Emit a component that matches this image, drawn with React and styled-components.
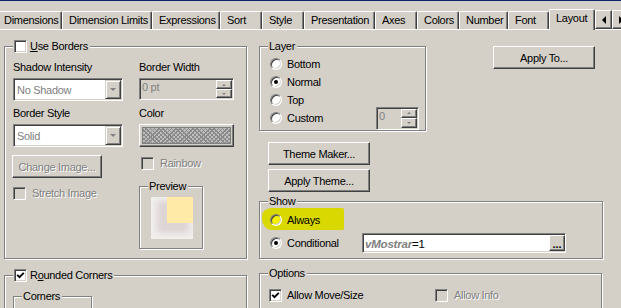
import React from "react";
import styled, { createGlobalStyle } from "styled-components";

const GlobalStyle = createGlobalStyle`
  html, body {
    margin: 0;
    padding: 0;
    background: #d4d0c8;
  }
  body {
    font-family: "Liberation Sans", Arial, sans-serif;
    font-size: 11px;
    letter-spacing: -0.3px;
    color: #000;
  }
  * {
    box-sizing: border-box;
  }
`;

const Window = styled.div`
  width: 621px;
  height: 308px;
  overflow: hidden;
  background: #d4d0c8;
  border-top: 1px solid #0a246a;
`;

/* ---------- tabs ---------- */

const TabRow = styled.div`
  display: flex;
  align-items: flex-start;
  height: 21px;
  margin: 8px 0 0 -3px;
`;

const Tab = styled.div`
  flex: none;
  width: ${(p) => p.$w}px;
  height: ${(p) => (p.$active ? 21 : 18)}px;
  margin-top: ${(p) => (p.$active ? 0 : 2)}px;
  padding: 2px 0 0 6px;
  line-height: 13px;
  white-space: nowrap;
  background: #d4d0c8;
  border-top: 1px solid #fff;
  border-left: 1px solid #fff;
  border-right: 1px solid #404040;
  border-radius: 2px 2px 0 0;
  box-shadow: inset -1px 0 #808080;
  position: relative;
  z-index: ${(p) => (p.$active ? 1 : 0)};
`;

const ScrollBtn = styled.div`
  flex: none;
  width: 17px;
  height: 19px;
  margin-top: 1px;
  display: flex;
  align-items: center;
  justify-content: center;
  background: #d4d0c8;
  border: 1px solid;
  border-color: #fff #404040 #404040 #fff;
  box-shadow: inset -1px -1px #808080;
`;

const Arrow = styled.span`
  width: 0;
  height: 0;
  border-style: solid;
  border-color: transparent;
  ${(p) => {
    const s = p.$size || 4;
    const c = p.$color || "#000";
    if (p.$dir === "left") return `border-width: ${s}px ${s}px ${s}px 0; border-right-color: ${c};`;
    if (p.$dir === "right") return `border-width: ${s}px 0 ${s}px ${s}px; border-left-color: ${c};`;
    if (p.$dir === "up") return `border-width: 0 ${s}px ${s}px; border-bottom-color: ${c};`;
    return `border-width: ${s}px ${s}px 0; border-top-color: ${c};`;
  }}
`;

/* ---------- panel ---------- */

const Panel = styled.div`
  margin-top: -1px;
  border-top: 1px solid #fff;
  display: grid;
  grid-template-columns: 243px 345px;
  column-gap: 12px;
  align-items: start;
  padding: 16px 0 0 4px;
`;

const Column = styled.div`
  display: flex;
  flex-direction: column;
  align-items: flex-start;
`;

const Group = styled.div`
  position: relative;
  flex: none;
  width: ${(p) => p.$w}px;
  height: ${(p) => p.$h}px;
  margin-top: ${(p) => p.$mt || 0}px;
  padding: ${(p) => p.$pad || "0"};
  border: 1px solid #808080;
  box-shadow: inset 1px 1px #fff, 1px 1px #fff;
`;

const Legend = styled.div`
  position: absolute;
  top: -7px;
  left: 8px;
  height: 13px;
  padding: 0 2px 0 1px;
  display: flex;
  align-items: center;
  gap: 3px;
  line-height: 13px;
  white-space: nowrap;
  background: #d4d0c8;
`;

const Label = styled.div`
  height: 13px;
  line-height: 13px;
  white-space: nowrap;
  margin-top: ${(p) => p.$mt || 0}px;
  color: ${(p) => (p.$disabled ? "#808080" : "#000")};
  text-shadow: ${(p) => (p.$disabled ? "1px 1px 0 #fff" : "none")};
`;

const Row = styled.div`
  position: relative;
  display: flex;
  align-items: center;
  gap: ${(p) => p.$gap ?? 5}px;
  height: ${(p) => p.$h || 18}px;
  margin-top: ${(p) => p.$mt || 0}px;
  margin-left: ${(p) => p.$ml || 0}px;
`;

const Sunken = styled.div`
  border: 1px solid;
  border-color: #808080 #fff #fff #808080;
  box-shadow: inset 1px 1px #404040, inset -1px -1px #d4d0c8;
`;

const CheckBox = styled(Sunken)`
  flex: none;
  width: 13px;
  height: 13px;
  display: flex;
  align-items: center;
  justify-content: center;
  background: ${(p) => (p.$disabled ? "#d4d0c8" : "#fff")};
`;

const RadioDot = styled.div`
  position: relative;
  flex: none;
  width: 12px;
  height: 12px;
  border-radius: 50%;
  display: flex;
  align-items: center;
  justify-content: center;
  background: ${(p) => (p.$marked ? "#f4f000" : "#fff")};
  border: 1px solid;
  border-color: #808080 #fff #fff #808080;
  box-shadow: inset 1px 1px #404040, inset -1px -1px #d4d0c8;

  &::after {
    content: "";
    width: 4px;
    height: 4px;
    border-radius: 50%;
    background: ${(p) => (p.$on ? "#000" : "transparent")};
  }
`;

const Button = styled.button`
  flex: none;
  width: ${(p) => p.$w}px;
  height: 23px;
  margin: ${(p) => p.$m || 0};
  padding: 0;
  display: flex;
  align-items: center;
  justify-content: center;
  font: inherit;
  letter-spacing: inherit;
  background: #d4d0c8;
  border: 1px solid;
  border-color: #fff #404040 #404040 #fff;
  box-shadow: inset -1px -1px #808080;
  color: ${(p) => (p.$disabled ? "#808080" : "#000")};
  text-shadow: ${(p) => (p.$disabled ? "1px 1px 0 #fff" : "none")};
`;

const Combo = styled(Sunken)`
  width: ${(p) => p.$w}px;
  height: 23px;
  display: flex;
  align-items: center;
  padding: 0 0 0 3px;
  background: #fff;
  color: #808080;
`;

const DropBtn = styled.div`
  margin-left: auto;
  width: 16px;
  height: 19px;
  margin-right: 1px;
  display: flex;
  align-items: center;
  justify-content: center;
  background: #d4d0c8;
  border: 1px solid;
  border-color: #d4d0c8 #404040 #404040 #d4d0c8;
  box-shadow: inset 1px 1px #fff, inset -1px -1px #808080;
`;

const Spin = styled(Sunken)`
  width: ${(p) => p.$w}px;
  height: ${(p) => p.$h}px;
  display: flex;
  padding: 1px 1px 1px 2px;
  background: #d4d0c8;
  color: #808080;
`;

const SpinText = styled.span`
  flex: 1;
  line-height: 13px;
  padding-top: 1px;
`;

const SpinBtns = styled.div`
  width: 16px;
  display: flex;
  flex-direction: column;
`;

const SpinBtn = styled.div`
  flex: 1;
  display: flex;
  align-items: center;
  justify-content: center;
  background: #d4d0c8;
  border: 1px solid;
  border-color: #fff #404040 #404040 #fff;
  box-shadow: inset -1px -1px #808080;
`;

const ColorBtn = styled.div`
  width: 95px;
  height: 23px;
  padding: 2px;
  background: #d4d0c8;
  border: 1px solid;
  border-color: #fff #404040 #404040 #fff;
  box-shadow: inset -1px -1px #808080;
`;

const Hatch = styled.div`
  width: 100%;
  height: 100%;
  border: 1px solid #808080;
  background: repeating-linear-gradient(
      45deg,
      #8a8a8a 0 1px,
      transparent 1px 3px
    ),
    repeating-linear-gradient(-45deg, #8a8a8a 0 1px, #bdbdbd 1px 3px);
`;

const SplitCols = styled.div`
  display: flex;
  gap: 16px;
`;

const Stack = styled.div`
  display: flex;
  flex-direction: column;
  align-items: flex-start;
  width: ${(p) => p.$w}px;
`;

const PreviewArt = styled.div`
  width: 42px;
  height: 42px;
  overflow: hidden;
  display: flex;
  justify-content: flex-end;
  background: #f2efef;
`;

const PreviewSquare = styled.div`
  width: 26px;
  height: 26px;
  background: #ffeaa8;
  box-shadow: -7px 7px 6px 3px rgba(170, 145, 145, 0.28);
`;

const Highlight = styled.span`
  position: absolute;
  left: -8px;
  top: -3px;
  width: 82px;
  height: 22px;
  background: #d9d800;
  border-radius: 10px 2px 3px 10px / 8px 2px 2px 11px;
  z-index: 0;
`;

const OnTop = styled.div`
  position: relative;
  z-index: 1;
  display: flex;
  align-items: center;
  gap: 5px;
`;

const Field = styled(Sunken)`
  width: 204px;
  height: 20px;
  display: flex;
  align-items: flex-end;
  padding: 2px 0 1px 2px;
  background: #fff;
`;

const FieldText = styled.span`
  flex: 1;
  line-height: 14px;
  align-self: center;
  letter-spacing: -0.2px;
  font-size: 11.5px;

  b {
    color: #808080;
    font-style: italic;
  }
`;

const DotsBtn = styled.div`
  width: 16px;
  height: 16px;
  display: flex;
  align-items: flex-end;
  justify-content: center;
  font-weight: bold;
  line-height: 11px;
  letter-spacing: 0;
  background: #d4d0c8;
  border: 1px solid;
  border-color: #fff #404040 #404040 #fff;
  box-shadow: inset -1px -1px #808080;
`;

const Check = ({ checked, disabled }) => (
  <CheckBox $disabled={disabled}>
    {checked && (
      <svg width="9" height="9" viewBox="0 0 9 9">
        <path d="M1.2 3.8 L3.5 6.1 L7.8 1.8" fill="none" stroke="#000" strokeWidth="1.9" />
      </svg>
    )}
  </CheckBox>
);

const Radio = ({ on, label }) => (
  <Row>
    <RadioDot $on={on} />
    <Label>{label}</Label>
  </Row>
);

const tabs = [
  ["Dimensions", 65],
  ["Dimension Limits", 90],
  ["Expressions", 68],
  ["Sort", 42],
  ["Style", 42],
  ["Presentation", 71],
  ["Axes", 42],
  ["Colors", 42],
  ["Number", 49],
  ["Font", 41],
  ["Layout", 46, true],
];

export default function App() {
  return (
    <>
      <GlobalStyle />
      <Window>
        <TabRow>
          {tabs.map(([name, w, active]) => (
            <Tab key={name} $w={w} $active={active}>
              {name}
            </Tab>
          ))}
          <ScrollBtn>
            <Arrow $dir="left" />
          </ScrollBtn>
          <ScrollBtn>
            <Arrow $dir="right" />
          </ScrollBtn>
        </TabRow>

        <Panel>
          <Column>
            <Group $w={243} $h={213} $pad="14px 0 0 8px">
              <Legend>
                <Check />
                <span>
                  <u>U</u>se Borders
                </span>
              </Legend>
              <SplitCols>
                <Stack $w={110}>
                  <Label>Shadow Intensity</Label>
                  <Combo $w={110} style={{ marginTop: 4 }}>
                    No Shadow
                    <DropBtn>
                      <Arrow $dir="down" $size={3} $color="#808080" />
                    </DropBtn>
                  </Combo>
                  <Label $mt={6}>Border Style</Label>
                  <Combo $w={110} style={{ marginTop: 4 }}>
                    Solid
                    <DropBtn>
                      <Arrow $dir="down" $size={3} $color="#808080" />
                    </DropBtn>
                  </Combo>
                  <Button $w={90} $m="8px 0 0 -1px" $disabled>
                    Change Image...
                  </Button>
                  <Row $gap={6} $h={13} $mt={9}>
                    <Check disabled />
                    <Label $disabled>Stretch Image</Label>
                  </Row>
                </Stack>
                <Stack $w={95}>
                  <Label>Border Width</Label>
                  <Spin $w={95} $h={22} style={{ marginTop: 4 }}>
                    <SpinText>0 pt</SpinText>
                    <SpinBtns>
                      <SpinBtn>
                        <Arrow $dir="up" $size={2} $color="#808080" />
                      </SpinBtn>
                      <SpinBtn>
                        <Arrow $dir="down" $size={2} $color="#808080" />
                      </SpinBtn>
                    </SpinBtns>
                  </Spin>
                  <Label $mt={7}>Color</Label>
                  <ColorBtn style={{ marginTop: 4 }}>
                    <Hatch />
                  </ColorBtn>
                  <Row $gap={6} $h={13} $mt={10} $ml={2}>
                    <Check disabled />
                    <Label $disabled>Rainbow</Label>
                  </Row>
                  <Group $w={64} $h={63} $mt={16} $pad="10px 0 0 11px">
                    <Legend>Preview</Legend>
                    <PreviewArt>
                      <PreviewSquare />
                    </PreviewArt>
                  </Group>
                </Stack>
              </SplitCols>
            </Group>

            <Group $w={243} $h={60} $mt={16} $pad="20px 0 0 8px">
              <Legend>
                <Check checked />
                <span>
                  R<u>o</u>unded Corners
                </span>
              </Legend>
              <Group $w={79} $h={40}>
                <Legend>Corners</Legend>
              </Group>
            </Group>
          </Column>

          <Column>
            <Row $h={85} $gap={0} style={{ alignItems: "flex-start", width: "100%" }}>
              <Group $w={167} $h={85} $pad="8px 6px 0 10px">
                <Legend>Layer</Legend>
                <Radio label="Bottom" />
                <Radio on label="Normal" />
                <Radio label="Top" />
                <Row>
                  <RadioDot />
                  <Label>Custom</Label>
                  <Spin $w={43} $h={23} style={{ marginLeft: "auto" }}>
                    <SpinText>0</SpinText>
                    <SpinBtns>
                      <SpinBtn>
                        <Arrow $dir="up" $size={2} $color="#808080" />
                      </SpinBtn>
                      <SpinBtn>
                        <Arrow $dir="down" $size={2} $color="#808080" />
                      </SpinBtn>
                    </SpinBtns>
                  </Spin>
                </Row>
              </Group>
              <Button $w={102} $m="0 9px 0 auto">
                Apply To...
              </Button>
            </Row>

            <Button $w={102} $m="11px 0 0 9px">
              Theme Maker...
            </Button>
            <Button $w={102} $m="4px 0 0 9px">
              Apply Theme...
            </Button>

            <Group $w={344} $h={58} $mt={9} $pad="9px 0 0 10px">
              <Legend>Show</Legend>
              <Row>
                <Highlight />
                <OnTop>
                  <RadioDot $marked />
                  <Label>Always</Label>
                </OnTop>
              </Row>
              <Row $h={20} $mt={4}>
                <RadioDot $on />
                <Label style={{ width: 70 }}>Conditional</Label>
                <Field>
                  <FieldText>
                    <b>vMostrar</b>=1
                  </FieldText>
                  <DotsBtn>...</DotsBtn>
                </Field>
              </Row>
            </Group>

            <Group $w={343} $h={50} $mt={14} $pad="15px 0 0 9px">
              <Legend>Options</Legend>
              <Row $h={13} $gap={0}>
                <Row $h={13} style={{ width: 166 }}>
                  <Check checked />
                  <Label>Allow Move/Size</Label>
                </Row>
                <Row $h={13} $gap={6}>
                  <Check disabled />
                  <Label $disabled>Allow Info</Label>
                </Row>
              </Row>
            </Group>
          </Column>
        </Panel>
      </Window>
    </>
  );
}
